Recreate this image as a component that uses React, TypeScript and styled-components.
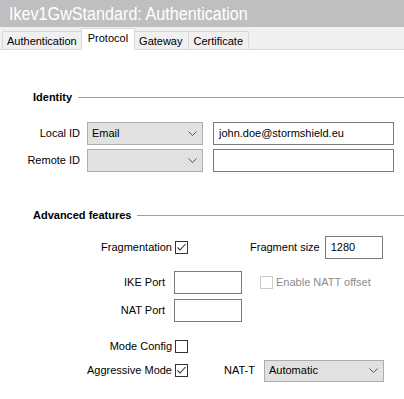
import { createGlobalStyle } from "styled-components";
import styled from "styled-components";

const GlobalStyle = createGlobalStyle`
  html, body {
    margin: 0;
    padding: 0;
    background: #ffffff;
  }
  body {
    font-family: "Liberation Sans", Arial, sans-serif;
    font-size: 11px;
    line-height: 13px;
    color: #000;
  }
`;

const Window = styled.div`
  width: 404px;
  height: 399px;
  overflow: hidden;
  background: #fff;
`;

const TitleBar = styled.div`
  height: 27px;
  background: #bfbfbf;
  color: #fff;
  font-family: "Liberation Sans Narrow", "Liberation Sans", Arial, sans-serif;
  font-size: 19px;
  line-height: 27px;
  padding-left: 9px;
`;

const TitleText = styled.span`
  display: inline-block;
  transform: scaleX(0.85);
  transform-origin: left center;
`;

const TabStrip = styled.div`
  height: 22px;
  background: #f0f0f0;
  border-bottom: 1px solid #d9d9d9;
  display: flex;
  align-items: flex-end;
  padding-left: 2px;
`;

const Tab = styled.div<{ $active?: boolean; $pad?: number }>`
  box-sizing: border-box;
  height: ${(p) => (p.$active ? "22px" : "19px")};
  line-height: 18px;
  padding: 0 ${(p) => p.$pad ?? (p.$active ? 6 : 4)}px;
  margin-bottom: -1px;
  margin-left: ${(p) => (p.$active ? "-1px" : "0")};
  margin-right: ${(p) => (p.$active ? "-1px" : "0")};
  background: ${(p) => (p.$active ? "#fff" : "#f0f0f0")};
  border: 1px solid #d9d9d9;
  border-bottom-color: ${(p) => (p.$active ? "#fff" : "#d9d9d9")};
  border-left-width: ${(p) => (p.$active ? "1px" : "0")};
  position: relative;
  z-index: ${(p) => (p.$active ? 1 : 0)};
  &:first-child {
    border-left-width: 1px;
  }
`;

const Body = styled.div`
  padding-top: 40px;
`;

const SectionHeader = styled.div<{ $top?: number }>`
  display: flex;
  align-items: center;
  gap: 6px;
  height: 15px;
  font-weight: bold;
  padding-left: 33px;
  margin-top: ${(p) => p.$top ?? 0}px;
  &::after {
    content: "";
    flex: 1;
    height: 1px;
    background: #a0a0a0;
  }
`;

const IdGrid = styled.div`
  display: grid;
  grid-template-columns: 80px 116px 184px;
  grid-auto-rows: 23px;
  column-gap: 7px;
  row-gap: 4px;
  margin-top: 17px;
  align-items: center;
  & > :nth-child(3n) {
    margin-left: 3px;
  }
`;

const Label = styled.div`
  text-align: right;
  white-space: nowrap;
`;

const Select = styled.div<{ $width?: number; $height?: number }>`
  box-sizing: border-box;
  height: ${(p) => p.$height ?? 23}px;
  width: ${(p) => (p.$width ? `${p.$width}px` : "auto")};
  background: #e1e1e1;
  border: 1px solid #adadad;
  display: flex;
  align-items: center;
  justify-content: space-between;
  padding: 0 5px 0 4px;
`;

const Input = styled.div<{ $width?: number }>`
  box-sizing: border-box;
  height: 23px;
  width: ${(p) => (p.$width ? `${p.$width}px` : "auto")};
  border: 1px solid #7a7a7a;
  background: #fff;
  display: flex;
  align-items: center;
  padding: 0 5px;
`;

const Check = styled.div<{ $disabled?: boolean }>`
  box-sizing: border-box;
  width: 13px;
  height: 13px;
  border: 1px solid ${(p) => (p.$disabled ? "#cccccc" : "#333333")};
  background: #fff;
  display: flex;
  align-items: center;
  justify-content: center;
  flex: none;
`;

const Row = styled.div<{ $top: number }>`
  display: flex;
  align-items: center;
  margin-top: ${(p) => p.$top}px;
  height: 23px;
`;

const CheckCell = styled.div`
  width: 188px;
  display: flex;
  align-items: center;
  justify-content: flex-end;
  gap: 3px;
`;

const PortCell = styled.div`
  width: 242px;
  display: flex;
  align-items: center;
  justify-content: flex-end;
  gap: 9px;
`;

const RightCell = styled.div<{ $gap: number; $left: number }>`
  display: flex;
  align-items: center;
  gap: ${(p) => p.$gap}px;
  margin-left: ${(p) => p.$left}px;
`;

const Muted = styled.span`
  color: #8c8c8c;
`;

const Chevron = () => (
  <svg width="9" height="6" viewBox="0 0 9 6">
    <path d="M0.5 0.5 L4.5 4.5 L8.5 0.5" fill="none" stroke="#555" strokeWidth="1" />
  </svg>
);

const Tick = () => (
  <svg width="11" height="11" viewBox="0 0 11 11">
    <path d="M1.5 5.5 L4 8 L9.5 2" fill="none" stroke="#333" strokeWidth="1.1" />
  </svg>
);

export default function App() {
  return (
    <>
      <GlobalStyle />
      <Window>
        <TitleBar>
          <TitleText>Ikev1GwStandard: Authentication</TitleText>
        </TitleBar>
        <TabStrip>
          <Tab>Authentication</Tab>
          <Tab $active>Protocol</Tab>
          <Tab $pad={5}>Gateway</Tab>
          <Tab $pad={5}>Certificate</Tab>
        </TabStrip>
        <Body>
          <SectionHeader>Identity</SectionHeader>
          <IdGrid>
            <Label>Local ID</Label>
            <Select>
              <span>Email</span>
              <Chevron />
            </Select>
            <Input>john.doe@stormshield.eu</Input>
            <Label>Remote ID</Label>
            <Select>
              <span />
              <Chevron />
            </Select>
            <Input />
          </IdGrid>

          <SectionHeader $top={36}>Advanced features</SectionHeader>

          <Row $top={13}>
            <CheckCell>
              <span>Fragmentation</span>
              <Check>
                <Tick />
              </Check>
            </CheckCell>
            <RightCell $gap={5} $left={62}>
              <span>Fragment size</span>
              <Input $width={58}>1280</Input>
            </RightCell>
          </Row>

          <Row $top={12}>
            <PortCell>
              <span>IKE Port</span>
              <Input $width={68} />
            </PortCell>
            <RightCell $gap={3} $left={18}>
              <Check $disabled />
              <Muted>Enable NATT offset</Muted>
            </RightCell>
          </Row>

          <Row $top={5}>
            <PortCell>
              <span>NAT Port</span>
              <Input $width={68} />
            </PortCell>
          </Row>

          <Row $top={13}>
            <CheckCell>
              <span>Mode Config</span>
              <Check />
            </CheckCell>
          </Row>

          <Row $top={1}>
            <CheckCell>
              <span>Aggressive Mode</span>
              <Check>
                <Tick />
              </Check>
            </CheckCell>
            <RightCell $gap={9} $left={36}>
              <span>NAT-T</span>
              <Select $width={120} $height={22}>
                <span>Automatic</span>
                <Chevron />
              </Select>
            </RightCell>
          </Row>
        </Body>
      </Window>
    </>
  );
}
